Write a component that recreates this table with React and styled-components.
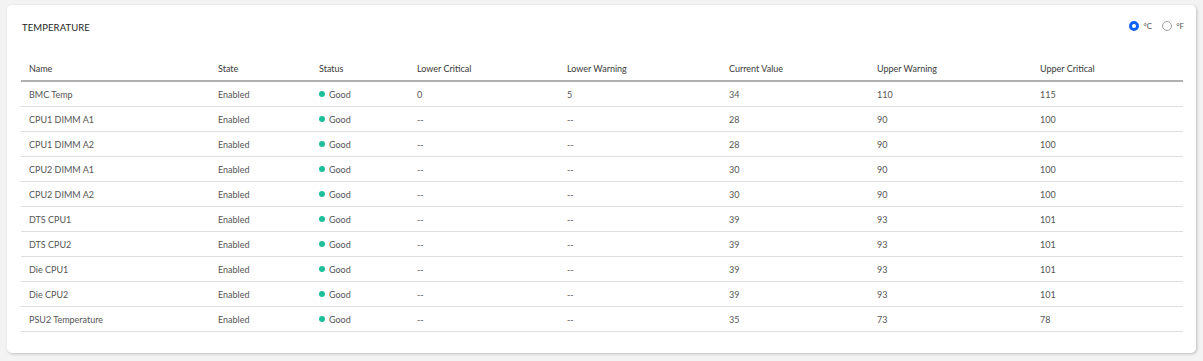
import React from "react";
import styled, { createGlobalStyle } from "styled-components";

const Global = createGlobalStyle`
  html, body { margin: 0; padding: 0; background: #f3f3f3; }
  body { font-family: "Lato", "Noto Sans", sans-serif; }
  #root { padding: 5px 7px 8px 7px; }
`;

const Card = styled.section`
  background: #fff;
  width: 1189px;
  height: 348px;
  box-sizing: border-box;
  border-radius: 5px;
  box-shadow: 1px 1px 3px rgba(0,0,0,0.22);
  padding: 14px 13px 0 14px;
`;

const HeaderBar = styled.div`
  display: flex;
  justify-content: space-between;
  align-items: flex-start;
  height: 38px;
  padding-left: 1px;
`;

const Title = styled.h2`
  margin: 0;
  margin-top: 3px;
  font-size: 9.5px;
  font-weight: 400;
  color: #262626;
  letter-spacing: 0.1px;
`;

const Units = styled.div`
  display: flex;
  align-items: center;
  gap: 10px;
  margin-top: 2px;
  margin-right: -1px;
`;

const Unit = styled.label`
  display: flex;
  align-items: center;
  gap: 4px;
  font-size: 8px;
  color: #555;
`;

const Radio = styled.span`
  width: 10px;
  height: 10px;
  box-sizing: border-box;
  border-radius: 50%;
  border: ${p => (p.$checked ? "3px solid #0f62fe" : "1px solid #a0a0a0")};
  background: #fff;
`;

const Table = styled.table`
  width: 1162px;
  border-collapse: collapse;
  table-layout: fixed;
  font-size: 9px;
`;

const Th = styled.th`
  text-align: left;
  font-weight: 400;
  color: #3a3a3a;
  height: 23px;
  padding: 0 0 0 8px;
  border-bottom: 2px solid #b0b0b0;
`;

const Td = styled.td`
  color: #555;
  height: 24px;
  padding: 0 0 0 8px;
  border-bottom: 1px solid #dedede;
  white-space: nowrap;
`;

const Status = styled.span`
  display: inline-flex;
  align-items: center;
  gap: 4px;
  &::before {
    content: "";
    width: 6px;
    height: 6px;
    border-radius: 50%;
    background: #1fbf9c;
    display: inline-block;
  }
`;

const widths = [189, 101, 98, 150, 162, 148, 163, 151];
const cols = ["Name", "State", "Status", "Lower Critical", "Lower Warning", "Current Value", "Upper Warning", "Upper Critical"];

const rows = [
  ["BMC Temp", "0", "5", "34", "110", "115"],
  ["CPU1 DIMM A1", "--", "--", "28", "90", "100"],
  ["CPU1 DIMM A2", "--", "--", "28", "90", "100"],
  ["CPU2 DIMM A1", "--", "--", "30", "90", "100"],
  ["CPU2 DIMM A2", "--", "--", "30", "90", "100"],
  ["DTS CPU1", "--", "--", "39", "93", "101"],
  ["DTS CPU2", "--", "--", "39", "93", "101"],
  ["Die CPU1", "--", "--", "39", "93", "101"],
  ["Die CPU2", "--", "--", "39", "93", "101"],
  ["PSU2 Temperature", "--", "--", "35", "73", "78"],
];

export default function App() {
  return (
    <>
      <Global />
      <Card>
        <HeaderBar>
          <Title>TEMPERATURE</Title>
          <Units>
            <Unit><Radio $checked />°C</Unit>
            <Unit><Radio />°F</Unit>
          </Units>
        </HeaderBar>
        <Table>
          <colgroup>
            {widths.map((w, i) => <col key={i} style={{ width: w }} />)}
          </colgroup>
          <thead>
            <tr>{cols.map(c => <Th key={c}>{c}</Th>)}</tr>
          </thead>
          <tbody>
            {rows.map(r => (
              <tr key={r[0]}>
                <Td>{r[0]}</Td>
                <Td>Enabled</Td>
                <Td><Status>Good</Status></Td>
                <Td>{r[1]}</Td>
                <Td>{r[2]}</Td>
                <Td>{r[3]}</Td>
                <Td>{r[4]}</Td>
                <Td>{r[5]}</Td>
              </tr>
            ))}
          </tbody>
        </Table>
      </Card>
    </>
  );
}
